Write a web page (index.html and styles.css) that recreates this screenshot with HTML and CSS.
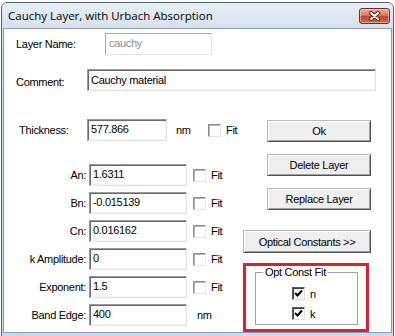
FILE: index.html
```html
<!DOCTYPE html>
<html lang="en">
<head>
    <meta charset="UTF-8">
    <meta name="viewport" content="width=device-width, initial-scale=1.0">
    <title>Cauchy Layer</title>
    <link rel="stylesheet" href="styles.css">
</head>
<body>
    <div class="window">
        <div class="titlebar">
            <span class="title">Cauchy Layer, with Urbach Absorption</span>
            <div class="close">
                <svg width="13" height="10" viewBox="0 0 13 10">
                    <path d="M3 2 L10 8 M10 2 L3 8" stroke="#5b1d14" stroke-width="4" stroke-linecap="round"/>
                    <path d="M3 2 L10 8 M10 2 L3 8" stroke="#fff" stroke-width="2.2" stroke-linecap="round"/>
                </svg>
            </div>
        </div>
        <div class="client">
            <div class="row name-row">
                <span class="lbl name-lbl">Layer Name:</span>
                <div class="edit disabled name-edit">cauchy</div>
            </div>
            <div class="row comment-row">
                <span class="lbl comment-lbl">Comment:</span>
                <div class="edit comment-edit">Cauchy material</div>
            </div>

            <div class="main">
                <div class="params">
                    <div class="row thick-row">
                        <span class="lbl thick-lbl">Thickness:</span>
                        <div class="edit thick-edit">577.866</div>
                        <span class="unit">nm</span>
                        <span class="check"></span><span class="fit">Fit</span>
                    </div>
                    <div class="plist">
                        <div class="row prow">
                            <span class="plabel">An:</span>
                            <div class="edit pedit">1.6311</div>
                            <span class="check"></span><span class="fit">Fit</span>
                        </div>
                        <div class="row prow">
                            <span class="plabel">Bn:</span>
                            <div class="edit pedit">-0.015139</div>
                            <span class="check"></span><span class="fit">Fit</span>
                        </div>
                        <div class="row prow">
                            <span class="plabel">Cn:</span>
                            <div class="edit pedit">0.016162</div>
                            <span class="check"></span><span class="fit">Fit</span>
                        </div>
                        <div class="row prow">
                            <span class="plabel">k Amplitude:</span>
                            <div class="edit pedit">0</div>
                            <span class="check"></span><span class="fit">Fit</span>
                        </div>
                        <div class="row prow">
                            <span class="plabel">Exponent:</span>
                            <div class="edit pedit">1.5</div>
                            <span class="check"></span><span class="fit">Fit</span>
                        </div>
                        <div class="row prow">
                            <span class="plabel">Band Edge:</span>
                            <div class="edit pedit">400</div>
                            <span class="band-unit">nm</span>
                        </div>
                    </div>
                </div>

                <div class="actions">
                    <div class="btn">Ok</div>
                    <div class="btn gap-s">Delete Layer</div>
                    <div class="btn gap-s">Replace Layer</div>
                    <div class="btn btn-wide">Optical Constants &gt;&gt;</div>
                    <div class="highlight">
                        <div class="group">
                            <span class="legend">Opt Const Fit</span>
                            <div class="gitem">
                                <span class="check checked">
                                    <svg width="9" height="9" viewBox="0 0 9 9"><path d="M1 4 L3.5 6.5 L8 1.5" fill="none" stroke="#000" stroke-width="2"/></svg>
                                </span>
                                <span class="fit">n</span>
                            </div>
                            <div class="gitem">
                                <span class="check checked">
                                    <svg width="9" height="9" viewBox="0 0 9 9"><path d="M1 4 L3.5 6.5 L8 1.5" fill="none" stroke="#000" stroke-width="2"/></svg>
                                </span>
                                <span class="fit">k</span>
                            </div>
                        </div>
                    </div>
                </div>
            </div>
        </div>
    </div>
</body>
</html>
```

FILE: styles.css
```css
* {
    box-sizing: border-box;
}
body {
    margin: 0;
    background: #fff;
    font-family: "Liberation Sans", Arial, sans-serif;
    font-size: 11px;
    letter-spacing: -0.3px;
    color: #000;
    overflow: hidden;
}
.window {
    width: 393px;
    margin: 2px 0 0 1px;
    padding: 0 1px 6px;
    border: 1px solid #54657b;
    border-radius: 6px 6px 0 0;
    background: #cbdaea;
}
.titlebar {
    height: 25px;
    margin: 0 -1px;
    padding: 0 3px 0 6px;
    display: flex;
    align-items: center;
    justify-content: space-between;
    background: linear-gradient(#e7eef6, #d7e1ec);
    border-radius: 5px 5px 0 0;
}
.title {
    font-family: "Open Sans", "Noto Sans", sans-serif;
    font-size: 11.5px;
    letter-spacing: 0;
}
.close {
    width: 31px;
    height: 16px;
    display: flex;
    align-items: center;
    justify-content: center;
    border: 1px solid #6e2d23;
    border-radius: 3px;
    background: linear-gradient(#eab0a2 0%, #d77a66 45%, #c1442d 52%, #cf6a50 100%);
    box-shadow: inset 0 0 0 1px rgba(255, 220, 210, 0.5);
}
.client {
    width: 389px;
    height: 305px;
    padding-left: 12px;
    border: 1px solid #8a9bb0;
    background: #fff;
}
.row {
    display: flex;
    align-items: center;
}
.edit {
    height: 22px;
    padding: 2px 0 0 3px;
    line-height: 14px;
    align-self: stretch;
    background: #fff;
    border: 1px solid;
    border-color: #9a9a9a #e3e3e3 #e3e3e3 #9a9a9a;
    box-shadow: inset 1px 1px 0 #6a6a6a, inset -1px -1px 0 #f4f4f4;
    white-space: nowrap;
}
.edit.disabled {
    color: #8d8d8d;
    box-shadow: none;
    border-color: #a9a9a9 #e3e3e3 #e3e3e3 #a9a9a9;
}
.name-row {
    height: 22px;
    margin-top: 4px;
}
.name-lbl {
    width: 89px;
}
.name-edit {
    width: 107px;
}
.comment-row {
    height: 25px;
    margin-top: 14px;
}
.comment-lbl {
    width: 71px;
}
.comment-edit {
    width: 289px;
    padding-top: 3px;
}
.main {
    display: flex;
    margin-top: 25px;
}
.params {
    width: 227px;
}
.thick-row {
    height: 22px;
}
.thick-lbl {
    width: 71px;
    padding-left: 3px;
}
.thick-edit {
    width: 80px;
}
.unit {
    width: 41px;
    padding-left: 9px;
}
.check {
    width: 13px;
    height: 13px;
    display: flex;
    align-items: center;
    justify-content: center;
    background: #fff;
    border: 1px solid;
    border-color: #8c8c8c #e6e6e6 #e6e6e6 #8c8c8c;
    box-shadow: inset 1px 1px 0 #b8b8b8;
}
.check.checked {
    border-color: #5e5e5e #e0e0e0 #e0e0e0 #5e5e5e;
    box-shadow: inset 1px 1px 0 #404040;
}
.fit {
    margin-left: 5px;
}
.plist {
    margin-top: 23px;
    display: flex;
    flex-direction: column;
    gap: 6px;
}
.prow {
    height: 22px;
}
.plabel {
    width: 73px;
    padding-right: 3px;
    text-align: right;
}
.pedit {
    width: 98px;
}
.prow .check {
    margin-left: 6px;
}
.band-unit {
    margin-left: 10px;
}
.actions {
    width: 128px;
    margin-top: 1px;
    display: flex;
    flex-direction: column;
    align-items: flex-end;
}
.btn {
    width: 104px;
    height: 22px;
    display: flex;
    align-items: center;
    justify-content: center;
    background: #efefef;
    border: 1px solid;
    border-color: #b9b9b9 #505050 #505050 #b9b9b9;
    box-shadow: inset 1px 1px 0 #fff, inset -1px -1px 0 #a0a0a0;
}
.gap-s {
    margin-top: 12px;
}
.btn-wide {
    width: 128px;
    height: 23px;
    margin-top: 20px;
}
.highlight {
    width: 126px;
    height: 69px;
    margin-top: 10px;
    align-self: flex-start;
    border: 3px solid #d8222c;
}
.group {
    position: relative;
    width: 103px;
    height: 53px;
    margin: 6px 0 0 9px;
    padding: 14px 0 0 36px;
    border: 1px solid #a3a3a3;
    display: flex;
    flex-direction: column;
    gap: 7px;
}
.legend {
    position: absolute;
    top: -7px;
    left: 7px;
    padding: 0 2px;
    line-height: 13px;
    background: #fff;
}
.gitem {
    display: flex;
    align-items: center;
    height: 13px;
}
```
